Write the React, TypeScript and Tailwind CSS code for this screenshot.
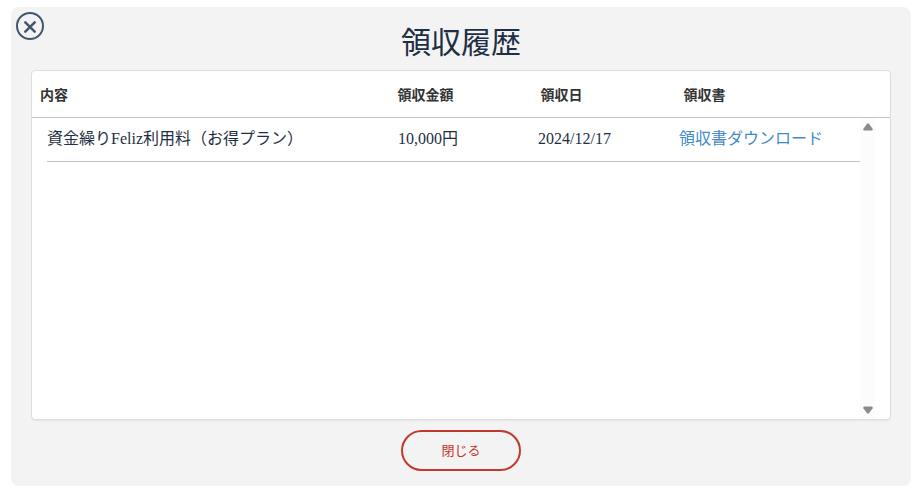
const receipts = [
  { name: '資金繰りFeliz利用料（お得プラン）', amount: '10,000円', date: '2024/12/17' },
];

function ScrollRail() {
  return (
    <div
      aria-hidden="true"
      className="absolute top-[47px] right-[15px] bottom-0 flex w-[15px] flex-col items-center justify-between bg-[#fcfcfc] py-[5px] text-[#8b8b8b]"
    >
      <svg width="10" height="8" viewBox="0 0 10 8" fill="currentColor">
        <path d="M4 .7Q5 0 6 .7L9.6 5.8Q10 7.4 9 7.5H1Q0 7.4.4 5.8Z" />
      </svg>
      <svg width="10" height="8" viewBox="0 0 10 8" fill="currentColor">
        <path d="M4 7.3Q5 8 6 7.3L9.6 2.2Q10 .6 9 .5H1Q0 .6.4 2.2Z" />
      </svg>
    </div>
  );
}

export default function App() {
  return (
    <main className="bg-white pt-[7px] pr-[9px] pb-[13px] pl-[11px] font-['Liberation_Serif','Noto_Sans_CJK_JP',serif] text-[#1e2f43]">
      <section className="relative flex flex-col items-center rounded-lg bg-[#f3f3f3] px-5 pt-4 pb-[15px]">
        <button
          type="button"
          aria-label="閉じる"
          className="absolute top-[5px] left-[5px] text-[#42566d]"
        >
          <svg width="28" height="28" viewBox="0 0 28 28" fill="none" stroke="currentColor">
            <circle cx="14" cy="14" r="13" strokeWidth="2" />
            <path d="M9.3 10.3l9.4 9.4M18.7 10.3l-9.4 9.4" strokeWidth="2.5" strokeLinecap="round" />
          </svg>
        </button>
        <h1 className="text-[30px] leading-10">領収履歴</h1>
        <div className="relative mt-[7px] h-[350px] w-full rounded border border-[#dddddd] bg-white shadow-[0_1px_1px_rgba(0,0,0,0.05)]">
          <table className="block text-left">
            <thead className="block border-b border-[#c4c4c4] text-sm text-[#333333]">
              <tr className="grid grid-cols-12 leading-[30px]">
                <th className="col-span-5 px-2 pt-2.5 pb-1.5 font-bold">内容</th>
                <th className="col-span-2 px-2 pt-2.5 pb-1.5 font-bold">領収金額</th>
                <th className="col-span-2 px-2 pt-2.5 pb-1.5 font-bold">領収日</th>
                <th className="col-span-3 px-2 pt-2.5 pb-1.5 font-bold">領収書</th>
              </tr>
            </thead>
            <tbody className="block pr-[30px] pl-[15px]">
              {receipts.map((receipt) => (
                <tr
                  key={receipt.date}
                  className="grid grid-cols-[351fr_140fr_141fr_181fr] border-b border-[#c4c4c4] pt-[9px] pb-2.5 text-base leading-6"
                >
                  <td>{receipt.name}</td>
                  <td>{receipt.amount}</td>
                  <td>{receipt.date}</td>
                  <td>
                    <a href="#receipt" className="text-[#428bca]">
                      領収書ダウンロード
                    </a>
                  </td>
                </tr>
              ))}
            </tbody>
          </table>
          <ScrollRail />
        </div>
        <button
          type="button"
          className="mt-2.5 h-[41px] w-[120px] rounded-full border-2 border-[#c0392b] text-[13px] text-[#c0392b]"
        >
          閉じる
        </button>
      </section>
    </main>
  );
}
